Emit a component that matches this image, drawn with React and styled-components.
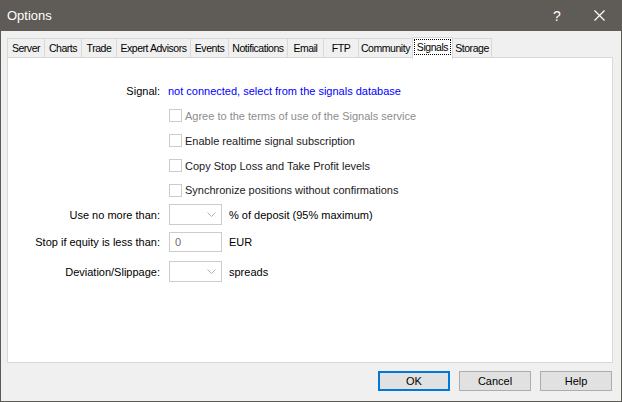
import React from 'react';
import styled, { createGlobalStyle } from 'styled-components';

const GlobalStyles = createGlobalStyle`
  html, body {
    margin: 0;
    padding: 0;
    background: #f0f0f0;
  }
  body {
    font-family: "Liberation Sans", Arial, sans-serif;
    font-size: 11px;
    color: #000;
  }
`;

const Window = styled.div`
  width: 622px;
  height: 402px;
  box-sizing: border-box;
  border: 1px solid #5d5955;
  border-top: none;
  background: #f0f0f0;
  display: flex;
  flex-direction: column;
`;

const TitleBar = styled.div`
  height: 31px;
  background: #5f5b56;
  color: #fff;
  display: flex;
  align-items: center;
  padding-left: 7px;
  margin: 0 -1px;
`;

const Title = styled.div`
  flex: 1;
  font-size: 13px;
`;

const TitleButton = styled.div`
  width: 46px;
  height: 31px;
  display: flex;
  align-items: center;
  justify-content: center;
  font-size: 14px;
  padding-left: ${p => p.$shift || 0}px;
  box-sizing: border-box;
`;

const Body = styled.div`
  flex: 1;
  display: flex;
  flex-direction: column;
  padding: 6px 8px 0 6px;
`;

const TabStrip = styled.div`
  display: flex;
  align-items: flex-end;
  height: 21px;
  position: relative;
  z-index: 1;
`;

const Tab = styled.div`
  box-sizing: border-box;
  width: ${p => p.$w}px;
  height: ${p => (p.$active ? 22 : 20)}px;
  margin-bottom: ${p => (p.$active ? -1 : 0)}px;
  margin-left: -1px;
  background: ${p => (p.$active ? '#fff' : '#f0f0f0')};
  border: 1px solid #d9d9d9;
  border-bottom: ${p => (p.$active ? 'none' : '1px solid #d9d9d9')};
  display: flex;
  align-items: center;
  justify-content: center;
  padding-bottom: ${p => (p.$active ? 3 : 0)}px;
  white-space: nowrap;
  font-size: 10.5px;
  letter-spacing: -0.45px;
  &:first-child { margin-left: 0; }
`;

const FocusText = styled.span`
  outline: 1px dotted #000;
  outline-offset: 1px;
  padding: 0 1px;
`;

const Panel = styled.div`
  box-sizing: border-box;
  height: 306px;
  background: #fff;
  border: 1px solid #d9d9d9;
  margin-top: -1px;
  padding-top: 20px;
  display: flex;
  flex-direction: column;
`;

const Row = styled.div`
  display: grid;
  grid-template-columns: 152px 1fr;
  column-gap: 8px;
  align-items: center;
  height: ${p => p.$h}px;
`;

const Label = styled.div`
  text-align: right;
`;

const Value = styled.div`
  display: flex;
  align-items: center;
  gap: 7px;
`;

const Link = styled.span`
  color: #0000ff;
`;

const CheckRow = styled.label`
  display: flex;
  align-items: center;
  gap: 2px;
  margin-left: 1px;
  color: ${p => (p.$disabled ? '#8d8d8d' : '#1a1a1a')};
`;

const Check = styled.span`
  width: 11px;
  height: 11px;
  border: 1px solid #cccccc;
  background: #fff;
  margin-right: 1px;
`;

const Combo = styled.div`
  box-sizing: border-box;
  width: 53px;
  height: 21px;
  border: 1px solid #cccccc;
  background: #fff;
  display: flex;
  align-items: center;
  justify-content: flex-end;
  padding-right: 5px;
  margin-left: 1px;
`;

const Field = styled.div`
  box-sizing: border-box;
  width: 53px;
  height: 20px;
  border: 1px solid #cccccc;
  background: #fff;
  display: flex;
  align-items: center;
  padding-left: 5px;
  color: #6d6d6d;
  margin-left: 1px;
`;

const Footer = styled.div`
  flex: 1;
  display: flex;
  justify-content: flex-end;
  align-items: flex-start;
  gap: 9px;
  padding-top: 8px;
  padding-right: 1px;
`;

const Button = styled.div`
  box-sizing: border-box;
  width: 72px;
  height: 20px;
  background: #e1e1e1;
  border: ${p => (p.$default ? '2px solid #0078d7' : '1px solid #adadad')};
  display: flex;
  align-items: center;
  justify-content: center;
`;

const Chevron = () => (
  <svg width="9" height="5" viewBox="0 0 9 5">
    <path d="M0.5 0.5 L4.5 4.5 L8.5 0.5" fill="none" stroke="#b4b4b4" strokeWidth="1" />
  </svg>
);

const CloseIcon = () => (
  <svg width="11" height="11" viewBox="0 0 11 11">
    <path d="M0.5 0.5 L10.5 10.5 M10.5 0.5 L0.5 10.5" stroke="#fff" strokeWidth="1.2" />
  </svg>
);

const tabs = [
  ['Server', 38], ['Charts', 38], ['Trade', 36], ['Expert Advisors', 75], ['Events', 39],
  ['Notifications', 60], ['Email', 37], ['FTP', 36], ['Community', 55], ['Signals', 41], ['Storage', 40],
];

const checks = [
  ['Agree to the terms of use of the Signals service', true],
  ['Enable realtime signal subscription', false],
  ['Copy Stop Loss and Take Profit levels', false],
  ['Synchronize positions without confirmations', false],
];

export default function App() {
  return (
    <Window>
      <GlobalStyles />
      <TitleBar>
        <Title>Options</Title>
        <TitleButton $shift={8}>?</TitleButton>
        <TitleButton><CloseIcon /></TitleButton>
      </TitleBar>
      <Body>
        <TabStrip>
          {tabs.map(([name, w]) => (
            <Tab key={name} $w={w} $active={name === 'Signals'}>
              {name === 'Signals' ? <FocusText>{name}</FocusText> : name}
            </Tab>
          ))}
        </TabStrip>
        <Panel>
          <Row $h={25}>
            <Label>Signal:</Label>
            <Value><Link>not connected, select from the signals database</Link></Value>
          </Row>
          {checks.map(([text, disabled], i) => (
            <Row key={text} $h={i === 3 ? 24 : 25}>
              <span />
              <CheckRow $disabled={disabled}><Check />{text}</CheckRow>
            </Row>
          ))}
          <Row $h={25}>
            <Label>Use no more than:</Label>
            <Value><Combo><Chevron /></Combo>% of deposit (95% maximum)</Value>
          </Row>
          <Row $h={30}>
            <Label>Stop if equity is less than:</Label>
            <Value><Field>0</Field>EUR</Value>
          </Row>
          <Row $h={29}>
            <Label>Deviation/Slippage:</Label>
            <Value><Combo><Chevron /></Combo>spreads</Value>
          </Row>
        </Panel>
        <Footer>
          <Button $default>OK</Button>
          <Button>Cancel</Button>
          <Button>Help</Button>
        </Footer>
      </Body>
    </Window>
  );
}
